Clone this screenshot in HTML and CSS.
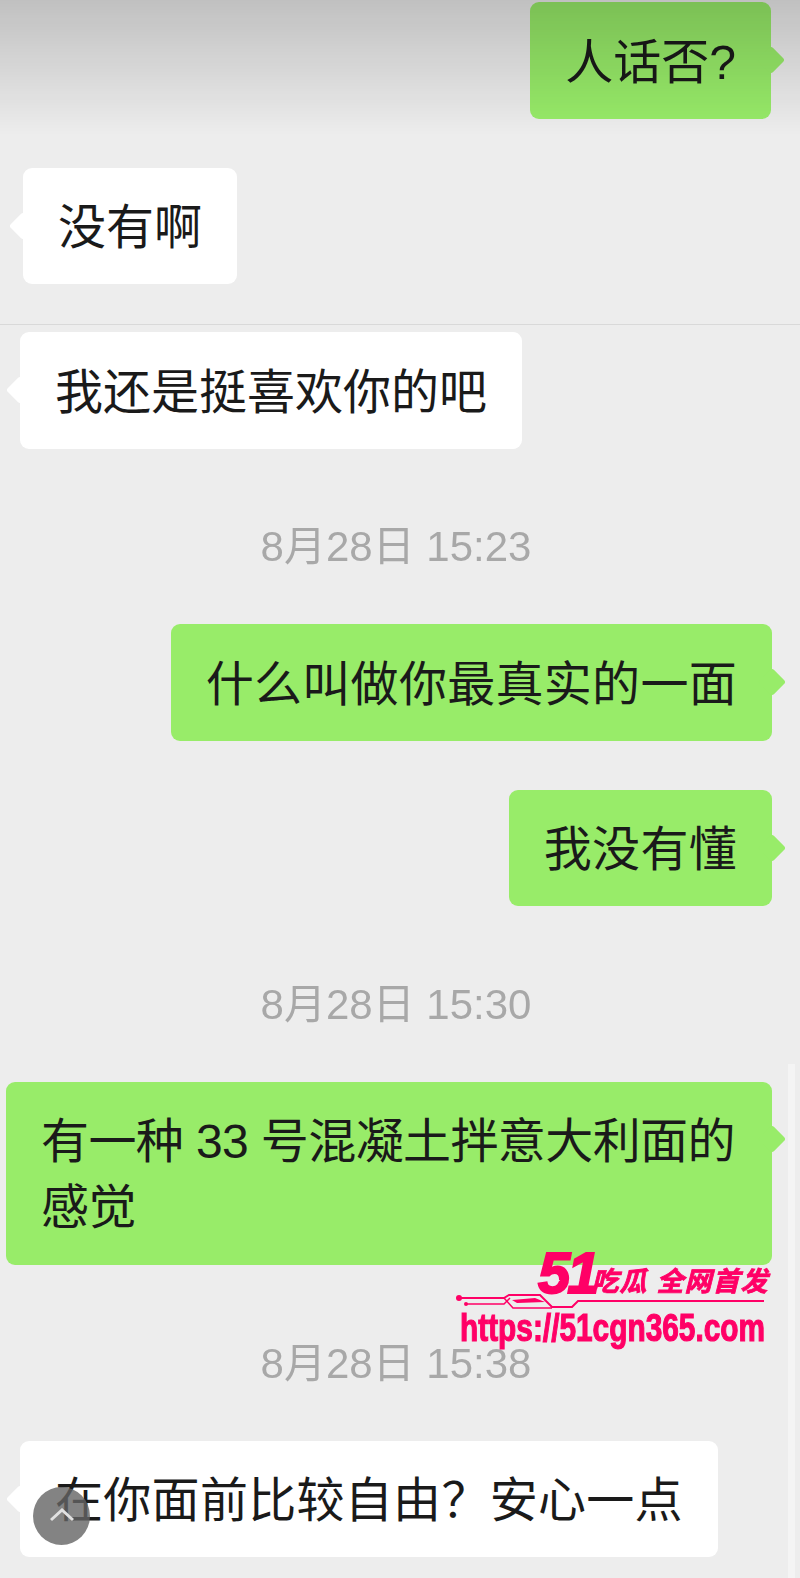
FILE: index.html
```html
<!DOCTYPE html>
<html>
<head>
  <title>Chat</title>
  <link rel="stylesheet" href="styles.css">
</head>
<body>
  <div class="chat">
    <div class="row row-me row-first"><div class="bubble bubble-me bubble-snug">人话否?</div></div>
    <div class="row row-them row-inset"><div class="bubble bubble-them bubble-snug">没有啊</div></div>
    <hr class="divider">
    <div class="row row-them row-tight"><div class="bubble bubble-them bubble-snug">我还是挺喜欢你的吧</div></div>

    <div class="time">8月28日 15:23</div>
    <div class="row row-me row-after-time"><div class="bubble bubble-me">什么叫做你最真实的一面</div></div>
    <div class="row row-me"><div class="bubble bubble-me">我没有懂</div></div>

    <div class="time">8月28日 15:30</div>
    <div class="row row-me row-after-time row-wide"><div class="bubble bubble-me bubble-wide">有一种 33 号混凝土拌意大利面的<br>感觉</div></div>

    <div class="time">8月28日 15:38</div>
    <div class="row row-them row-after-time"><div class="bubble bubble-them">在你面前比较自由？安心一点</div></div>
  </div>

  <div class="top-shade"></div>
  <div class="scrollbar"></div>

  <button class="to-top">
    <svg class="to-top-icon" width="24" height="14" viewBox="0 0 24 14"><path d="M1 12 L12 2 L23 12" fill="none" stroke="#e0e0e0" stroke-width="3"/></svg>
  </button>

  <div class="watermark">
    <div class="wm-top">
      <span class="wm-logo">51<svg class="wm-play" width="11" height="11" viewBox="0 0 14 14"><path d="M1 1 L13 7 L1 13 Z" fill="#ededed"/></svg></span>
      <span class="wm-tag wm-tag-short">吃瓜</span>
      <span class="wm-tag">全网首发</span>
    </div>
    <svg class="wm-line" width="312" height="20" viewBox="0 0 312 20">
      <circle cx="5" cy="6" r="3" fill="#ff0066"/>
      <circle cx="12" cy="12" r="2" fill="#ff0066"/>
      <path d="M5 6 H50 L55 3 H86 L98 15 H118 L124 9 H310" fill="none" stroke="#ff0066" stroke-width="2"/>
      <path d="M12 12 H50 L56 6 M50 6 L59 16 H98" fill="none" stroke="#ff0066" stroke-width="1.5"/>
      <path d="M58 8 L81 6 L91 10 L63 11 Z" fill="#ff0066"/>
    </svg>
    <div class="wm-url">https://51cgn365.com</div>
  </div>
</body>
</html>
```

FILE: styles.css
```css
html, body {
  margin: 0;
  height: 1578px;
  overflow: hidden;
}
body {
  position: relative;
  background-color: #ededed;
  font-family: "Liberation Sans", "Noto Sans CJK SC", sans-serif;
}
.chat {
  filter: blur(0.5px);
}
.row {
  display: flex;
  margin-top: 49px;
  padding: 0 28px 0 20px;
}
.row-me {
  justify-content: flex-end;
}
.row-them {
  justify-content: flex-start;
}
.row-first {
  margin-top: 0;
  padding-top: 2px;
  padding-right: 29px;
}
.row-inset {
  padding-left: 23px;
}
.row-tight {
  margin-top: 7px;
}
.row-after-time {
  margin-top: 0;
}
.row-wide {
  padding-left: 6px;
}
.bubble {
  position: relative;
  padding: 27.5px 35px 23px;
  border-radius: 9px;
  font-size: 48px;
  letter-spacing: 0.3px;
  line-height: 66px;
  color: #1a1a1a;
  white-space: nowrap;
}
.bubble::after {
  content: "";
  position: absolute;
  top: 50%;
  width: 20px;
  height: 20px;
  margin-top: -10px;
  border-radius: 3px;
  transform: rotate(45deg);
  background-color: inherit;
}
.bubble-me {
  background-color: #98ec69;
}
.bubble-me::after {
  right: -10px;
}
.bubble-them {
  background-color: #fff;
}
.bubble-them::after {
  left: -10px;
}
.bubble-snug {
  letter-spacing: 0;
}
.bubble-wide {
  flex: 1;
  padding-bottom: 24px;
  letter-spacing: -0.6px;
}
.bubble-wide::after {
  top: 57px;
}
.divider {
  height: 1px;
  margin: 40px 0 0;
  border: 0;
  background-color: #d9d9d9;
}
.time {
  margin: 73.5px 8px 52px 0;
  font-size: 42px;
  line-height: 50px;
  text-align: center;
  color: #a8a8a8;
}
.top-shade {
  position: absolute;
  top: 0;
  left: 0;
  right: 0;
  height: 135px;
  background: linear-gradient(to bottom, rgba(0,0,0,0.19), rgba(0,0,0,0));
}
.scrollbar {
  position: absolute;
  top: 1064px;
  right: 5px;
  bottom: 0;
  width: 7px;
  background-color: #f4f4f4;
}
.to-top {
  position: absolute;
  left: 33px;
  top: 1487px;
  width: 57px;
  height: 58px;
  padding: 0 0 3px;
  border: none;
  border-radius: 50%;
  background-color: rgba(100,100,100,0.8);
}
.to-top-icon {
  display: block;
  margin: 0 auto;
}
.watermark {
  position: absolute;
  left: 454px;
  top: 1244px;
  width: 316px;
  color: #ff0066;
}
.wm-top {
  display: flex;
  align-items: flex-end;
  height: 48px;
  padding-left: 84px;
  font-style: italic;
  font-weight: 700;
  white-space: nowrap;
}
.wm-logo {
  position: relative;
  margin-right: -5px;
  font-size: 58px;
  line-height: 38px;
  letter-spacing: -3px;
  -webkit-text-stroke: 2px #ff0066;
}
.wm-play {
  position: absolute;
  left: 12px;
  bottom: 6px;
}
.wm-tag {
  font-family: "Noto Sans CJK SC", sans-serif;
  font-size: 27px;
  letter-spacing: 1px;
  line-height: 24px;
  -webkit-text-stroke: 0.8px #ff0066;
}
.wm-tag-short {
  margin-right: 9px;
}
.wm-line {
  display: block;
}
.wm-url {
  margin: -6px 0 0 6px;
  font-weight: 700;
  font-size: 39px;
  line-height: 44px;
  white-space: nowrap;
  transform: scaleX(0.765);
  transform-origin: left center;
  -webkit-text-stroke: 1.2px #ff0066;
}
```
